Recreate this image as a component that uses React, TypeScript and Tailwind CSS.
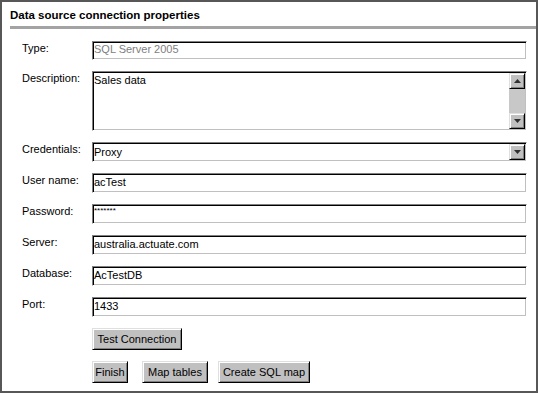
import React from 'react';

const inset =
  'border border-t-[#808080] border-l-[#808080] border-r-white border-b-white shadow-[inset_1px_1px_0_#000,inset_-1px_-1px_0_#c0c0c0] bg-white';

const raised =
  'border border-t-[#dfdfdf] border-l-[#dfdfdf] border-r-black border-b-black shadow-[inset_1px_1px_0_#fff,inset_-1px_-1px_0_#808080] bg-[#c0c0c0]';

const Arrow = ({ down }: { down?: boolean }) => (
  <svg width="7" height="4" viewBox="0 0 7 4">
    {down ? <polygon points="0,0 7,0 3.5,4" fill="#303030" /> : <polygon points="0,4 7,4 3.5,0" fill="#303030" />}
  </svg>
);

const Row = ({ label, children }: { label: string; children: React.ReactNode }) => (
  <div className="flex items-start">
    <div className="w-[70px] shrink-0 pt-[1px]">{label}</div>
    {children}
  </div>
);

const Input = ({ value }: { value: string }) => (
  <div className={`flex-1 h-[20px] pl-[1px] pt-[2px] ${inset}`}>{value}</div>
);

const Button = ({ label, w }: { label: string; w: string }) => (
  <button className={`${w} h-[22px] flex items-center justify-center ${raised}`}>{label}</button>
);

export default function App() {
  return (
    <div className="w-[538px] h-[393px] border-2 border-[#575757] bg-white font-['Liberation_Sans',Arial,sans-serif] text-[11px] leading-[13px] text-black">
      <div className="pl-[8px] pt-[6px]">
        <h1 className="font-bold text-[11.5px] leading-[14px]">Data source connection properties</h1>
        <div className="mt-[4px] h-[3px] bg-[#a3a3a3]" />
      </div>

      <div className="pl-[20px] pr-[9px] pt-[12px] flex flex-col gap-[11px]">
        <Row label="Type:">
          <div className={`flex-1 h-[19px] pl-[1px] pt-[1px] text-[#808080] ${inset}`}>SQL Server 2005</div>
        </Row>

        <Row label="Description:">
          <div className={`flex-1 h-[60px] flex ${inset}`}>
            <div className="flex-1 pl-[1px] pt-[2px]">Sales data</div>
            <div className="w-[16px] mr-[1px] my-[1px] flex flex-col bg-[#c8c8c8]">
              <div className={`h-[16px] flex items-center justify-center bg-[#b4b4b4] ${raised}`}>
                <Arrow />
              </div>
              <div className="flex-1" />
              <div className={`h-[16px] flex items-center justify-center bg-[#b4b4b4] ${raised}`}>
                <Arrow down />
              </div>
            </div>
          </div>
        </Row>

        <Row label="Credentials:">
          <div className={`flex-1 h-[20px] flex items-center ${inset}`}>
            <div className="flex-1 pl-[1px] pt-[1px]">Proxy</div>
            <div className={`w-[16px] h-[16px] mr-[1px] flex items-center justify-center bg-[#b4b4b4] ${raised}`}>
              <Arrow down />
            </div>
          </div>
        </Row>

        <Row label="User name:">
          <Input value="acTest" />
        </Row>

        <Row label="Password:">
          <div className={`flex-1 h-[20px] pl-[1px] pt-[2px] text-[8px] leading-[8px] ${inset}`}>*******</div>
        </Row>

        <Row label="Server:">
          <Input value="australia.actuate.com" />
        </Row>

        <Row label="Database:">
          <Input value="AcTestDB" />
        </Row>

        <Row label="Port:">
          <Input value="1433" />
        </Row>

        <div className="pl-[70px]">
          <Button label="Test Connection" w="w-[90px]" />
        </div>

        <div className="pl-[70px] flex">
          <Button label="Finish" w="w-[36px]" />
          <div className="ml-[14px]">
            <Button label="Map tables" w="w-[66px]" />
          </div>
          <div className="ml-[10px]">
            <Button label="Create SQL map" w="w-[92px]" />
          </div>
        </div>
      </div>
    </div>
  );
}
